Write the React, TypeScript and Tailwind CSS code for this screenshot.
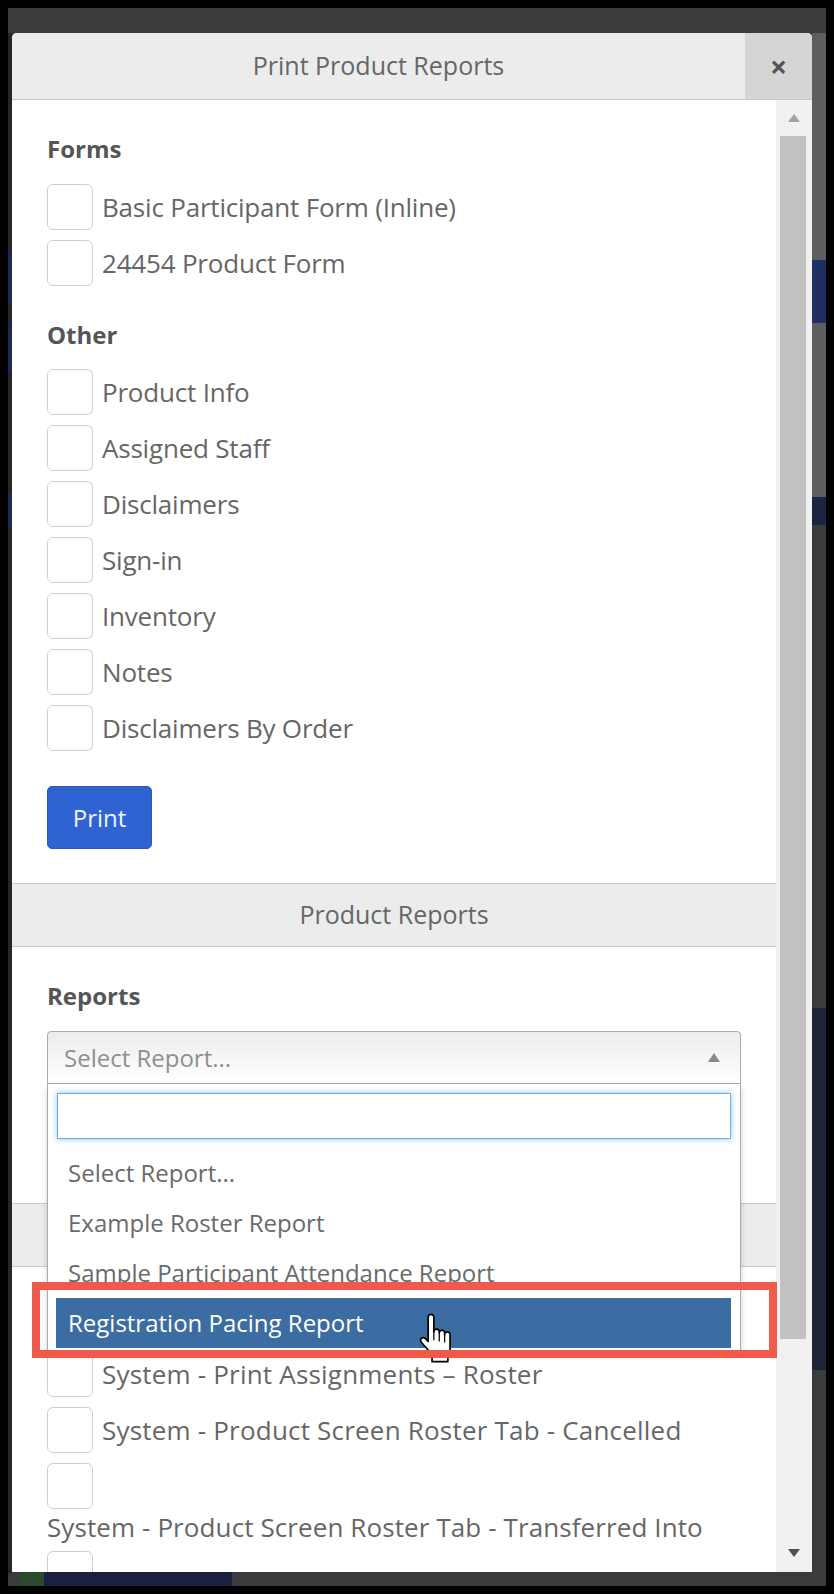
import React from "react";

// Print Product Reports modal, dropdown open over the "Reports" select

const formItems = ["Basic Participant Form (Inline)", "24454 Product Form"];

const otherItems = [
  "Product Info",
  "Assigned Staff",
  "Disclaimers",
  "Sign-in",
  "Inventory",
  "Notes",
  "Disclaimers By Order",
];

const reportOptions = [
  "Select Report...",
  "Example Roster Report",
  "Sample Participant Attendance Report",
];

const Box = () => (
  <span className="block w-[46px] h-[46px] shrink-0 rounded-[6px] border border-[#cfcfcf] bg-white" />
);

const CheckRow = ({ label, wide }: { label: string; wide?: boolean }) => (
  <label
    className={
      wide
        ? "flex items-center gap-[9px] h-[46px] text-[26px] tracking-[0.2px] text-[#666] whitespace-nowrap"
        : "flex items-center gap-[9px] h-[46px] text-[26px] tracking-[-0.2px] text-[#666] whitespace-nowrap"
    }
  >
    <Box />
    <span>{label}</span>
  </label>
);

const Heading = ({ children }: { children: React.ReactNode }) => (
  <h3 className="h-[32px] flex items-center text-[24px] font-bold text-[#555]">{children}</h3>
);

const SectionBar = ({ title }: { title?: string }) => (
  <div className="h-[64px] flex items-center justify-center border-y border-[#c8c8c8] bg-[#ececec] text-[25px] text-[#666]">
    {title}
  </div>
);

const HandCursor = () => (
  <svg width="36" height="52" viewBox="0 0 32 46" className="absolute z-20 left-[418px] top-[1312px]">
    <path
      d="M11.5 2a2.5 2.5 0 0 0-2.5 2.5V26l-2.6-2.6a2.4 2.4 0 0 0-3.4 3.4L10.5 35.5c1.3 1.6 2 3.5 2 5.5V44h14v-3c0-1.8 2-4.5 2-7V20a2.4 2.4 0 0 0-4.8 0v-1.5a2.4 2.4 0 0 0-4.8 0v-1a2.4 2.4 0 0 0-4.8 0V4.5A2.5 2.5 0 0 0 11.5 2Z"
      fill="#fff"
      stroke="#000"
      strokeWidth="1.5"
      strokeLinejoin="round"
    />
    <path d="M14.1 17.5V25M18.9 18.5V26M23.7 20V27" stroke="#000" strokeWidth="1.1" />
  </svg>
);

export default function App() {
  return (
    <div className="relative w-[834px] h-[1594px] overflow-hidden bg-black p-[8px] font-['Open_Sans',sans-serif]">
      <div className="relative h-full bg-[#3a3b3d] pt-[25px] pl-[4px] pr-[14px] pb-[14px]">
        {/* page behind the overlay, barely visible at the edges */}
        <div className="absolute left-0 top-[25px] w-[4px] h-[1540px] bg-[#262626]" />
        <div className="absolute left-0 top-[242px] w-[4px] h-[53px] bg-[#1c2a52]" />
        <div className="absolute left-0 top-[314px] w-[4px] h-[51px] bg-[#1c2a52]" />
        <div className="absolute left-0 top-[485px] w-[4px] h-[34px] bg-[#1c2a52]" />
        <div className="absolute right-0 top-[25px] w-[14px] h-[464px] bg-[#5e5e5e]" />
        <div className="absolute right-0 top-[252px] w-[14px] h-[63px] bg-[#1f2f63]" />
        <div className="absolute right-0 top-[489px] w-[14px] h-[28px] bg-[#1b2541]" />
        <div className="absolute right-0 top-[1000px] w-[14px] h-[362px] bg-[#1e2336]" />
        <div className="absolute left-[12px] bottom-0 w-[24px] h-[14px] bg-[#2e4a2c]" />
        <div className="absolute left-[36px] bottom-0 w-[188px] h-[14px] bg-[#1a2140]" />

        {/* modal */}
        <div className="relative flex flex-col w-[800px] h-full rounded-t-[5px] overflow-hidden bg-white">
          <div className="flex h-[67px] shrink-0 border-b border-[#c6c6c6] bg-[#ececec]">
            <div className="flex-1 flex items-center justify-center text-[25px] text-[#666]">
              Print Product Reports
            </div>
            <button className="w-[67px] flex items-center justify-center bg-[#d5d5d5] text-[30px] font-bold text-[#555]">
              ×
            </button>
          </div>

          <div className="flex flex-1 min-h-0">
            <div className="relative flex-1 overflow-hidden">
              <div className="px-[35px] pt-[33px]">
                <Heading>Forms</Heading>
                <div className="mt-[19px] flex flex-col gap-[10px]">
                  {formItems.map((l) => (
                    <CheckRow key={l} label={l} />
                  ))}
                </div>
                <div className="mt-[33px]">
                  <Heading>Other</Heading>
                </div>
                <div className="mt-[18px] flex flex-col gap-[10px]">
                  {otherItems.map((l) => (
                    <CheckRow key={l} label={l} />
                  ))}
                </div>
                <button className="mt-[35px] w-[105px] h-[63px] rounded-[5px] border border-[#2a58bd] bg-[#2f63d2] text-[24px] text-[#eef3ff]">
                  Print
                </button>
              </div>

              <div className="mt-[34px]">
                <SectionBar title="Product Reports" />
              </div>

              <div className="px-[35px] pt-[33px]">
                <Heading>Reports</Heading>
                <div className="relative z-10 mt-[19px]">
                  <div className="flex items-center justify-between h-[53px] px-[16px] rounded-t-[4px] border border-[#aaa] bg-gradient-to-b from-[#ececec] to-white text-[24px] text-[#8f8f8f]">
                    <span>Select Report...</span>
                    <svg width="12" height="9" viewBox="0 0 12 9" className="mr-[4px]">
                      <path d="M6 0 12 9H0Z" fill="#888" />
                    </svg>
                  </div>
                  <div className="absolute left-0 right-0 top-full bg-white border border-t-0 border-[#aaa] shadow-[0_4px_6px_rgba(0,0,0,0.18)] pt-[9px] pb-[3px]">
                    <div className="mx-[9px] h-[46px] border border-[#66afe9] shadow-[0_0_6px_rgba(102,175,233,0.7)] bg-white" />
                    <ul className="mt-[9px] ml-[8px] mr-[9px]">
                      {reportOptions.map((o) => (
                        <li key={o} className="h-[50px] flex items-center px-[12px] text-[24px] text-[#6a6a6a] whitespace-nowrap">
                          {o}
                        </li>
                      ))}
                      <li className="h-[50px] flex items-center px-[12px] bg-[#3b6ca2] text-[24px] text-white whitespace-nowrap">
                        Registration Pacing Report
                      </li>
                    </ul>
                  </div>
                </div>
                <div className="h-[119px]" />
              </div>

              <SectionBar />

              <div className="px-[35px] pt-[84px]">
                <div className="flex flex-col gap-[10px]">
                  <CheckRow wide label="System - Print Assignments – Roster" />
                  <CheckRow wide label="System - Product Screen Roster Tab - Cancelled" />
                  <Box />
                </div>
                <div className="h-[36px] flex items-center text-[26px] tracking-[0.1px] text-[#666] whitespace-nowrap">
                  System - Product Screen Roster Tab - Transferred Into
                </div>
                <div className="mt-[6px]">
                  <Box />
                </div>
              </div>
            </div>

            {/* scrollbar */}
            <div className="w-[36px] shrink-0 flex flex-col bg-[#f1f1f1]">
              <div className="h-[36px] flex items-center justify-center">
                <svg width="12" height="8" viewBox="0 0 12 8">
                  <path d="M6 0 12 8H0Z" fill="#a3a3a3" />
                </svg>
              </div>
              <div className="ml-[4px] w-[26px] h-[1203px] bg-[#c1c1c1]" />
              <div className="flex-1" />
              <div className="h-[38px] flex items-center justify-center">
                <svg width="12" height="8" viewBox="0 0 12 8">
                  <path d="M0 0H12L6 8Z" fill="#505050" />
                </svg>
              </div>
            </div>
          </div>
        </div>
      </div>

      <HandCursor />
      {/* annotation */}
      <div className="absolute z-30 left-[32px] top-[1282px] w-[745px] h-[76px] border-[8px] border-[#ef5a4a]" />
    </div>
  );
}
